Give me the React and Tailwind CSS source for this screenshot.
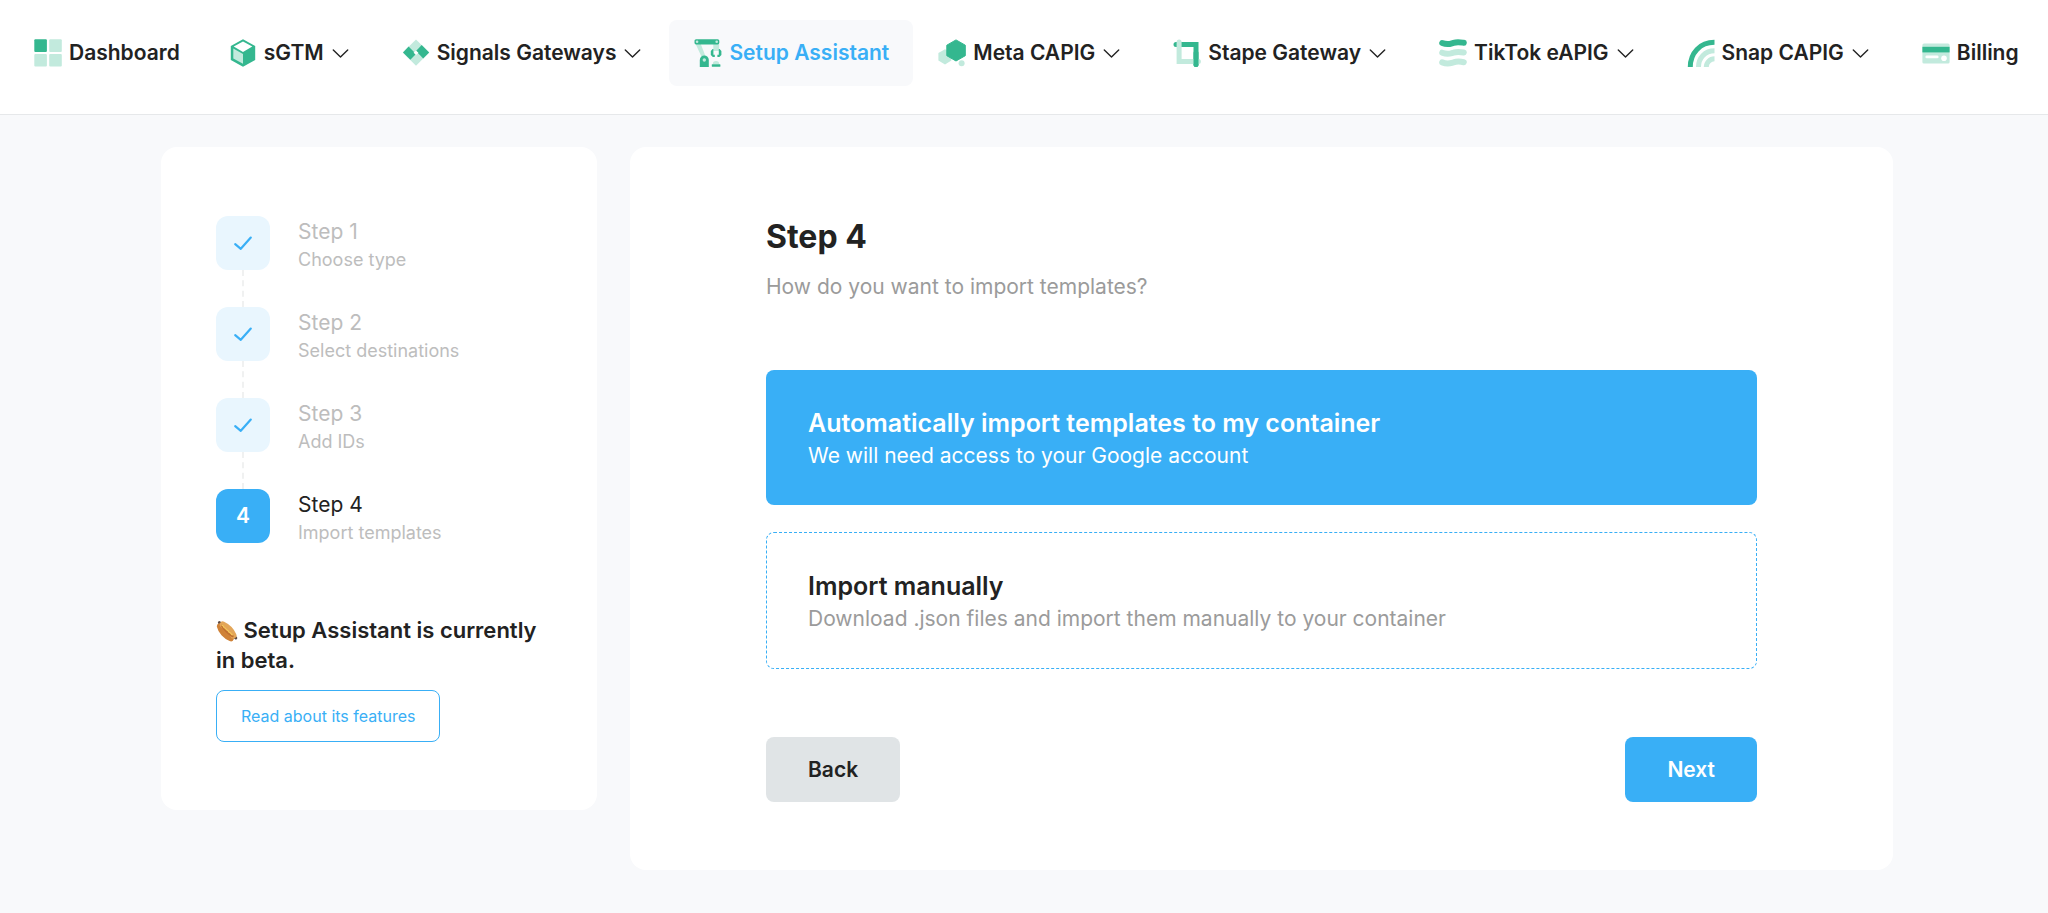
import { useState } from 'react'

const DARK = '#34b78f'
const LIGHT = '#c2eadd'

function DashboardIcon() {
  return (
    <svg viewBox="0 0 28 28" className="w-7 h-7">
      <rect x="0.3" y="0.3" width="12.6" height="12.6" rx="1" fill={DARK} />
      <rect x="15.2" y="0.3" width="12.6" height="12.6" rx="1" fill={LIGHT} />
      <rect x="0.3" y="15" width="12.6" height="12.6" rx="1" fill={LIGHT} />
      <rect x="15.2" y="15" width="12.6" height="12.6" rx="1" fill={LIGHT} />
    </svg>
  )
}

function CubeIcon() {
  return (
    <svg viewBox="0 0 28 28" className="w-7 h-7">
      <path d="M14 0.3 26.2 7v14L14 27.7 1.8 21V7Z" fill={DARK} />
      <path d="M14 2.4 23.3 7.4 14 13 4.7 7.4Z" fill="#fff" />
      <path d="M4.3 9.6 14 15v9.8L4.3 19.5Z" fill={LIGHT} />
    </svg>
  )
}

function SignalsIcon() {
  return (
    <svg viewBox="0 0 28 28" className="w-7 h-7">
      <path d="M14 0.4 27.2 13.6 14 26.8 0.8 13.6Z" fill={LIGHT} />
      <path d="M6.6 7.6 14 14.9 8.3 20.8 1 13.6Z" fill={DARK} />
      <path d="M19.7 6 27.2 13.6 21.2 19.4 14 12.1Z" fill={DARK} />
      <path d="M14 11.4 16.4 13.7 14 16.1 11.6 13.7Z" fill="#fff" />
    </svg>
  )
}

function RobotIcon() {
  return (
    <svg viewBox="0 0 28 28" className="w-7 h-7">
      <path d="M1.4 4.5h5.2l5 13H7.4Z" fill={LIGHT} />
      <path d="M19.3 4.5h5.8v7.5h-5.8Z" fill={LIGHT} />
      <rect x="0.5" y="0.2" width="24.8" height="5.2" rx="1.6" fill={DARK} />
      <circle cx="3.1" cy="2.8" r="1.3" fill={LIGHT} />
      <circle cx="22.7" cy="2.8" r="1.3" fill={LIGHT} />
      <path d="M18.6 10 16.8 12v4l2 2h2v-2.3h-1.4V10ZM25.6 10 27.4 12v4l-2 2h-2v-2.3h1.4V10Z" fill={DARK} />
      <path d="M5.8 28V20.9a4.5 4.5 0 0 1 9 0V28Z" fill={DARK} />
      <circle cx="10.3" cy="21" r="1.7" fill={LIGHT} />
      <path d="M18.8 25a3.2 3 0 0 1 6.4 0Z" fill={LIGHT} />
      <rect x="17.8" y="25.2" width="8.6" height="2.6" rx="0.6" fill={DARK} />
    </svg>
  )
}

function MetaIcon() {
  return (
    <svg viewBox="0 0 28 28" className="w-7 h-7">
      <path d="M7 10.2 13.4 14v7.6L7 25.4 0.4 21.6V14Z" fill={LIGHT} />
      <circle cx="23.6" cy="24.2" r="3" fill={LIGHT} />
      <path
        d="M18 0.9 27.3 6.2v10.5L18 22 8.8 16.7V6.2Z"
        fill={DARK}
        stroke={DARK}
        strokeWidth="1"
        strokeLinejoin="round"
      />
    </svg>
  )
}

function StapeIcon() {
  return (
    <svg viewBox="0 0 28 28" className="w-7 h-7">
      <g fill="none" strokeWidth="5" strokeLinecap="round">
        <path d="M3 5.6H23V25.4" stroke={DARK} />
        <path d="M6.1 3V22.6H25.4" stroke={LIGHT} />
        <path d="M23 14V25.4" stroke={DARK} />
      </g>
    </svg>
  )
}

function WavesIcon() {
  return (
    <svg viewBox="0 0 28 28" className="w-7 h-7">
      <g fill="none" strokeWidth="6" strokeLinecap="round">
        <path d="M3.2 4C9 6.2 10.5 5 14.5 3.8 18.5 2.6 21 3.2 24.8 3.8" stroke={DARK} />
        <path d="M3.2 13.7C9 15.8 10.5 14.7 14.5 13.6 18.5 12.4 21 12.8 24.8 13.5" stroke={LIGHT} />
        <path d="M3.2 23.4C9 25.6 10.5 24.5 14.5 23.4 18.5 22 21 22.4 24.8 23.2" stroke={LIGHT} />
      </g>
    </svg>
  )
}

function SnapIcon() {
  return (
    <svg viewBox="0 0 28 28" className="w-7 h-7">
      <g fill="none" strokeWidth="5">
        <path d="M3.3 28C3.3 14 13 3.3 27.5 3.3" stroke={DARK} />
        <path d="M11.5 28C11.5 19 18 11.8 27.5 11.8" stroke={LIGHT} />
        <path d="M19.3 28C19.3 23.5 23 19.8 27.5 19.8" stroke={LIGHT} />
      </g>
    </svg>
  )
}

function CardIcon() {
  return (
    <svg viewBox="0 0 28 28" className="w-7 h-7">
      <rect x="0.4" y="4.5" width="27.2" height="20" rx="1.6" fill={LIGHT} />
      <rect x="0.4" y="7.8" width="27.2" height="5.6" fill={DARK} />
      <rect x="3.4" y="16.5" width="13.2" height="2.8" rx="1.4" fill="#fff" />
      <circle cx="22" cy="19.2" r="2.8" fill="#fff" />
    </svg>
  )
}

function HotdogIcon() {
  return (
    <svg viewBox="0 0 22 22" role="img" aria-label="hot dog" className="inline-block w-[22px] h-[22px] align-[-4px]">
      <g fill="none" strokeLinecap="round">
        <path d="M3.4 2.6 19.8 18" stroke="#5d4a44" strokeWidth="3" />
        <path d="M4 6.4C5 11 9.5 16 14.8 18.2" stroke="#cf8238" strokeWidth="6.2" />
        <path d="M6.8 4.6C11 6.6 15.4 10.8 17.4 15.4" stroke="#e3a659" strokeWidth="6.2" />
        <path d="M6 5.8C8.5 10 12 13.4 16.6 16.2" stroke="#c06f30" strokeWidth="2.2" />
        <path
          d="M6 5.4c2-.4 1 2.2 2.600 2.400s1 2.200 2.600 2.400 1 2.200 2.600 2.400 1 2 2.600 2.200"
          stroke="#f6c95c"
          strokeWidth="1.2"
        />
      </g>
    </svg>
  )
}

function Chevron() {
  return (
    <svg viewBox="0 0 25 25" className="w-[25px] h-[25px] ml-1" fill="none" stroke="currentColor" strokeWidth="1.4">
      <path d="M5.3 9 12.5 16 19.7 9" strokeLinecap="round" strokeLinejoin="round" />
    </svg>
  )
}

const NAV = [
  { label: 'Dashboard', icon: DashboardIcon },
  { label: 'sGTM', icon: CubeIcon, menu: true },
  { label: 'Signals Gateways', icon: SignalsIcon, menu: true },
  { label: 'Setup Assistant', icon: RobotIcon, active: true },
  { label: 'Meta CAPIG', icon: MetaIcon, menu: true },
  { label: 'Stape Gateway', icon: StapeIcon, menu: true },
  { label: 'TikTok eAPIG', icon: WavesIcon, menu: true },
  { label: 'Snap CAPIG', icon: SnapIcon, menu: true },
  { label: 'Billing', icon: CardIcon },
]

const STEPS = [
  { title: 'Step 1', text: 'Choose type' },
  { title: 'Step 2', text: 'Select destinations' },
  { title: 'Step 3', text: 'Add IDs' },
  { title: 'Step 4', text: 'Import templates' },
]

const OPTIONS = [
  {
    id: 'auto',
    title: 'Automatically import templates to my container',
    text: 'We will need access to your Google account',
  },
  {
    id: 'manual',
    title: 'Import manually',
    text: 'Download .json files and import them manually to your container',
  },
]

function NavItem({ item }) {
  const Icon = item.icon
  const className = `flex items-center h-[66px] pl-[22px] pr-6 rounded-lg text-[21px] font-semibold whitespace-nowrap ${
    item.active ? 'bg-[#f8f9fb] text-[#39aff6]' : ''
  }`
  const content = (
    <>
      <span className="flex justify-center w-[34px] mr-1">
        <Icon />
      </span>
      {item.label}
      {item.menu && <Chevron />}
    </>
  )

  if (item.menu) {
    return (
      <button type="button" className={className}>
        {content}
      </button>
    )
  }

  return (
    <a href="#" className={className}>
      {content}
    </a>
  )
}

function Steps({ current }) {
  return (
    <ol>
      {STEPS.map((step, index) => {
        const number = index + 1
        const active = number === current
        return (
          <li key={step.title} className="flex gap-7">
            <div className="flex flex-col items-center">
              {active ? (
                <span className="flex items-center justify-center size-[54px] rounded-xl bg-[#39aff6] text-white text-[21px] font-semibold">
                  {number}
                </span>
              ) : (
                <span className="flex items-center justify-center size-[54px] rounded-xl bg-[#e9f6fe]">
                  <svg viewBox="0 0 20 20" className="size-5" fill="none" stroke="#39aff6" strokeWidth="2.2">
                    <path d="M2.2 11.2 7.8 15.8 17.8 4.6" strokeLinecap="round" strokeLinejoin="round" />
                  </svg>
                </span>
              )}
              {number < STEPS.length && <span className="h-[37px] border-l-2 border-dashed border-[#f0f1f1]" />}
            </div>
            <div>
              <p className={`text-[21px] leading-8 ${active ? 'text-[#222]' : 'text-[#bdbdbd]'}`}>{step.title}</p>
              <p className="text-lg leading-6 text-[#bdbdbd]">{step.text}</p>
            </div>
          </li>
        )
      })}
    </ol>
  )
}

function App() {
  const [option, setOption] = useState('auto')

  return (
    <div className="min-h-screen bg-[#f8f9fb] text-[#222] font-['Inter',sans-serif]">
      <header className="h-[115px] pt-5 pl-[9px] bg-white border-b border-[#e6e8ea]">
        <nav className="flex">
          {NAV.map((item) => (
            <NavItem key={item.label} item={item} />
          ))}
        </nav>
      </header>

      <main className="flex items-start gap-[33px] pt-8 pb-10 pl-[161px] pr-[155px]">
        <aside className="w-[436px] shrink-0 pt-[69px] pb-[68px] px-[55px] bg-white rounded-2xl">
          <Steps current={4} />
          <p className="mt-[70px] text-[22px] leading-[30px] font-semibold">
            <HotdogIcon /> Setup Assistant is currently in beta.
          </p>
          <a
            href="#"
            className="inline-flex items-center justify-center h-[52px] mt-[15px] px-6 border border-[#39aff6] rounded-lg text-base text-[#39aff6]"
          >
            Read about its features
          </a>
        </aside>

        <section className="flex-1 py-[68px] px-[136px] bg-white rounded-2xl">
          <h1 className="text-[32px] leading-[44px] font-bold">Step 4</h1>
          <p id="import-question" className="mt-3 text-[21px] leading-8 text-[#9b9b9b]">
            How do you want to import templates?
          </p>

          <div role="radiogroup" aria-labelledby="import-question" className="flex flex-col gap-[27px] mt-[67px]">
            {OPTIONS.map((item) => {
              const selected = item.id === option
              return (
                <label
                  key={item.id}
                  className={`block pt-[37px] pb-8 rounded-lg cursor-pointer ${
                    selected ? 'px-[42px] bg-[#39aff6] text-white' : 'px-[41px] border border-dashed border-[#39aff6]'
                  }`}
                >
                  <input
                    type="radio"
                    name="import"
                    className="sr-only"
                    checked={selected}
                    onChange={() => setOption(item.id)}
                  />
                  <span className="block text-[25px] leading-8 font-semibold">{item.title}</span>
                  <span className={`block text-[21px] leading-[34px] ${selected ? '' : 'text-[#9b9b9b]'}`}>
                    {item.text}
                  </span>
                </label>
              )
            })}
          </div>

          <div className="flex justify-between mt-[68px]">
            <button type="button" className="h-[65px] px-[42px] rounded-lg bg-[#e0e4e6] text-[21px] font-semibold">
              Back
            </button>
            <button type="button" className="h-[65px] px-[42px] rounded-lg bg-[#39aff6] text-white text-[21px] font-semibold">
              Next
            </button>
          </div>
        </section>
      </main>
    </div>
  )
}

export default App
